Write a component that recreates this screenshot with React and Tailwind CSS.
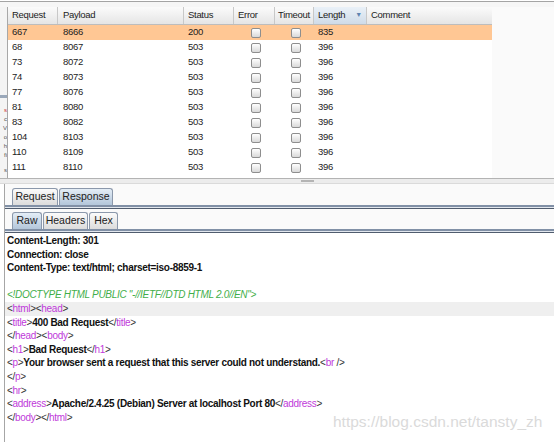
import React from 'react';

const rows = [
  ['667', '8666', '200', '835'],
  ['68', '8067', '503', '396'],
  ['73', '8072', '503', '396'],
  ['74', '8073', '503', '396'],
  ['77', '8076', '503', '396'],
  ['81', '8080', '503', '396'],
  ['83', '8082', '503', '396'],
  ['104', '8103', '503', '396'],
  ['110', '8109', '503', '396'],
  ['111', '8110', '503', '396'],
];

const Checkbox = () => (
  <span className="block w-[10px] h-[10px] rounded-[2px] border border-[#8e8e8e] bg-linear-to-b from-white to-[#d9d9d9]" />
);

const Tag = ({ children }) => <span className="text-[#c03ada] font-normal">{children}</span>;
const P = ({ children }) => <span className="text-[#333] font-normal">{children}</span>;

const Tab = ({ label, active, w }) => (
  <div
    className={`${w} h-[17px] flex items-center justify-center rounded-t-[3px] border border-b-0 border-[#8b98ab] text-[10.5px] text-[#222] ${
      active ? 'bg-linear-to-b from-[#e4edf6] to-[#b3c6da]' : 'bg-linear-to-b from-[#fbfbfb] to-[#dcdcdc]'
    }`}
  >
    {label}
  </div>
);

const Band = () => <div className="h-[4px] border-t-2 border-[#8190a6] bg-[#e2e7ee] border-b border-b-[#505c6e]" />;

export default function App() {
  return (
    <div
      className="relative w-[554px] h-[442px] overflow-hidden bg-white"
      style={{ fontFamily: '"Liberation Sans", Arial, sans-serif' }}
    >
      {/* top edge */}
      <div className="h-[1px] bg-white" />
      <div className="h-[1px] bg-[#a4a4a4]" />
      <div className="h-[5px] bg-[#f6f6f6]" />

      {/* results table */}
      <div className="flex h-[171px]">
        <div className="w-[8px] bg-[#f4f4f4] border-r border-[#a8a8a8] overflow-hidden flex flex-col items-end pt-[88px] text-[6px] leading-[9px] text-[#555]">
          <div className="w-[7px] h-[3px] bg-[#9aa8ba] mb-[8px]" />
          <span className="text-[#c33]">s</span>
          <span>c</span>
          <span>V</span>
          <span>o</span>
          <span>h</span>
          <span>fi</span>
          <span className="mt-[6px]">s</span>
        </div>
        <div className="w-[484px] bg-white text-[9.5px] tracking-[-0.3px] text-[#1c1c1c]">
          <div className="flex h-[18px] border-b border-[#bdbdbd] bg-linear-to-b from-[#fbfbfb] to-[#e5e5e5] text-[#222]">
            <div className="w-[50px] pl-[4px] flex items-center border-r border-[#c8c8c8]">Request</div>
            <div className="w-[126px] pl-[5px] flex items-center border-r border-[#c8c8c8]">Payload</div>
            <div className="w-[50px] pl-[4px] flex items-center border-r border-[#c8c8c8]">Status</div>
            <div className="w-[41px] pl-[4px] flex items-center border-r border-[#c8c8c8]">Error</div>
            <div className="w-[39px] pl-[3px] flex items-center border-r border-[#c8c8c8]">Timeout</div>
            <div className="w-[53px] pl-[4px] flex items-center justify-between pr-[4px] border-r border-[#c8c8c8] bg-linear-to-b from-[#eaf1f8] to-[#cfdbe8]">
              <span>Length</span>
              <span className="text-[7px] text-[#5f84b0]">▼</span>
            </div>
            <div className="flex-1 pl-[4px] flex items-center">Comment</div>
          </div>
          {rows.map((r, i) => (
            <div key={r[0]} className={`flex h-[15px] items-center ${i === 0 ? 'bg-[#ffc794]' : ''}`}>
              <div className="w-[50px] pl-[4px]">{r[0]}</div>
              <div className="w-[126px] pl-[5px]">{r[1]}</div>
              <div className="w-[50px] pl-[4px]">{r[2]}</div>
              <div className="w-[41px] flex justify-center pl-[2px]"><Checkbox /></div>
              <div className="w-[39px] flex justify-center pl-[2px]"><Checkbox /></div>
              <div className="w-[53px] pl-[4px]">{r[3]}</div>
              <div className="flex-1" />
            </div>
          ))}
        </div>
        <div className="flex-1 bg-[#fafafa]" />
      </div>

      {/* splitter */}
      <div className="h-[6px] border-t border-[#b3b3b3] border-b border-b-[#dadada] bg-[#ececec] flex items-center pl-[301px]">
        <div className="w-[13px] h-[2px] bg-[#b4b4b4]" />
      </div>

      {/* message editor */}
      <div className="flex h-[258px]">
        <div className="w-[5px] bg-white border-r border-[#a6a6a6]" />
        <div className="flex-1 flex flex-col">
          <div className="h-[21px] bg-[#fafafa] flex items-end gap-[1px] pl-[7px]">
            <Tab label="Request" w="w-[46px]" />
            <Tab label="Response" w="w-[54px]" active />
          </div>
          <Band />
          <div className="h-[20px] bg-[#fafafa] flex items-end gap-[1px] pl-[7px]">
            <Tab label="Raw" w="w-[30px]" active />
            <Tab label="Headers" w="w-[45px]" />
            <Tab label="Hex" w="w-[29px]" />
          </div>
          <Band />
          <div className="flex-1 bg-white pt-[1px] text-[10px] leading-[13.6px] tracking-[-0.3px] text-[#111] font-bold whitespace-nowrap">
            <div className="pl-[2px]">Content-Length: 301</div>
            <div className="pl-[2px]">Connection: close</div>
            <div className="pl-[2px]">Content-Type: text/html; charset=iso-8859-1</div>
            <div className="h-[13.6px]" />
            <div className="pl-[2px] italic font-normal text-[#3fae4a]">&lt;!DOCTYPE HTML PUBLIC "-//IETF//DTD HTML 2.0//EN"&gt;</div>
            <div className="pl-[2px] bg-[#efefef]">
              <P>&lt;</P><Tag>html</Tag><P>&gt;&lt;</P><Tag>head</Tag><P>&gt;</P>
            </div>
            <div className="pl-[2px]">
              <P>&lt;</P><Tag>title</Tag><P>&gt;</P>400 Bad Request<P>&lt;/</P><Tag>title</Tag><P>&gt;</P>
            </div>
            <div className="pl-[2px]">
              <P>&lt;/</P><Tag>head</Tag><P>&gt;&lt;</P><Tag>body</Tag><P>&gt;</P>
            </div>
            <div className="pl-[2px]">
              <P>&lt;</P><Tag>h1</Tag><P>&gt;</P>Bad Request<P>&lt;/</P><Tag>h1</Tag><P>&gt;</P>
            </div>
            <div className="pl-[2px]">
              <P>&lt;</P><Tag>p</Tag><P>&gt;</P>Your browser sent a request that this server could not understand.<P>&lt;</P><Tag>br</Tag><P> /&gt;</P>
            </div>
            <div className="pl-[2px]">
              <P>&lt;/</P><Tag>p</Tag><P>&gt;</P>
            </div>
            <div className="pl-[2px]">
              <P>&lt;</P><Tag>hr</Tag><P>&gt;</P>
            </div>
            <div className="pl-[2px]">
              <P>&lt;</P><Tag>address</Tag><P>&gt;</P>Apache/2.4.25 (Debian) Server at localhost Port 80<P>&lt;/</P><Tag>address</Tag><P>&gt;</P>
            </div>
            <div className="pl-[2px]">
              <P>&lt;/</P><Tag>body</Tag><P>&gt;&lt;/</P><Tag>html</Tag><P>&gt;</P>
            </div>
          </div>
        </div>
      </div>

      {/* watermark */}
      <div className="absolute left-[333px] top-[413px] text-[15.5px] leading-[18px] text-[#dadada] whitespace-nowrap">
        https://blog.csdn.net/tansty_zh
      </div>
    </div>
  );
}
